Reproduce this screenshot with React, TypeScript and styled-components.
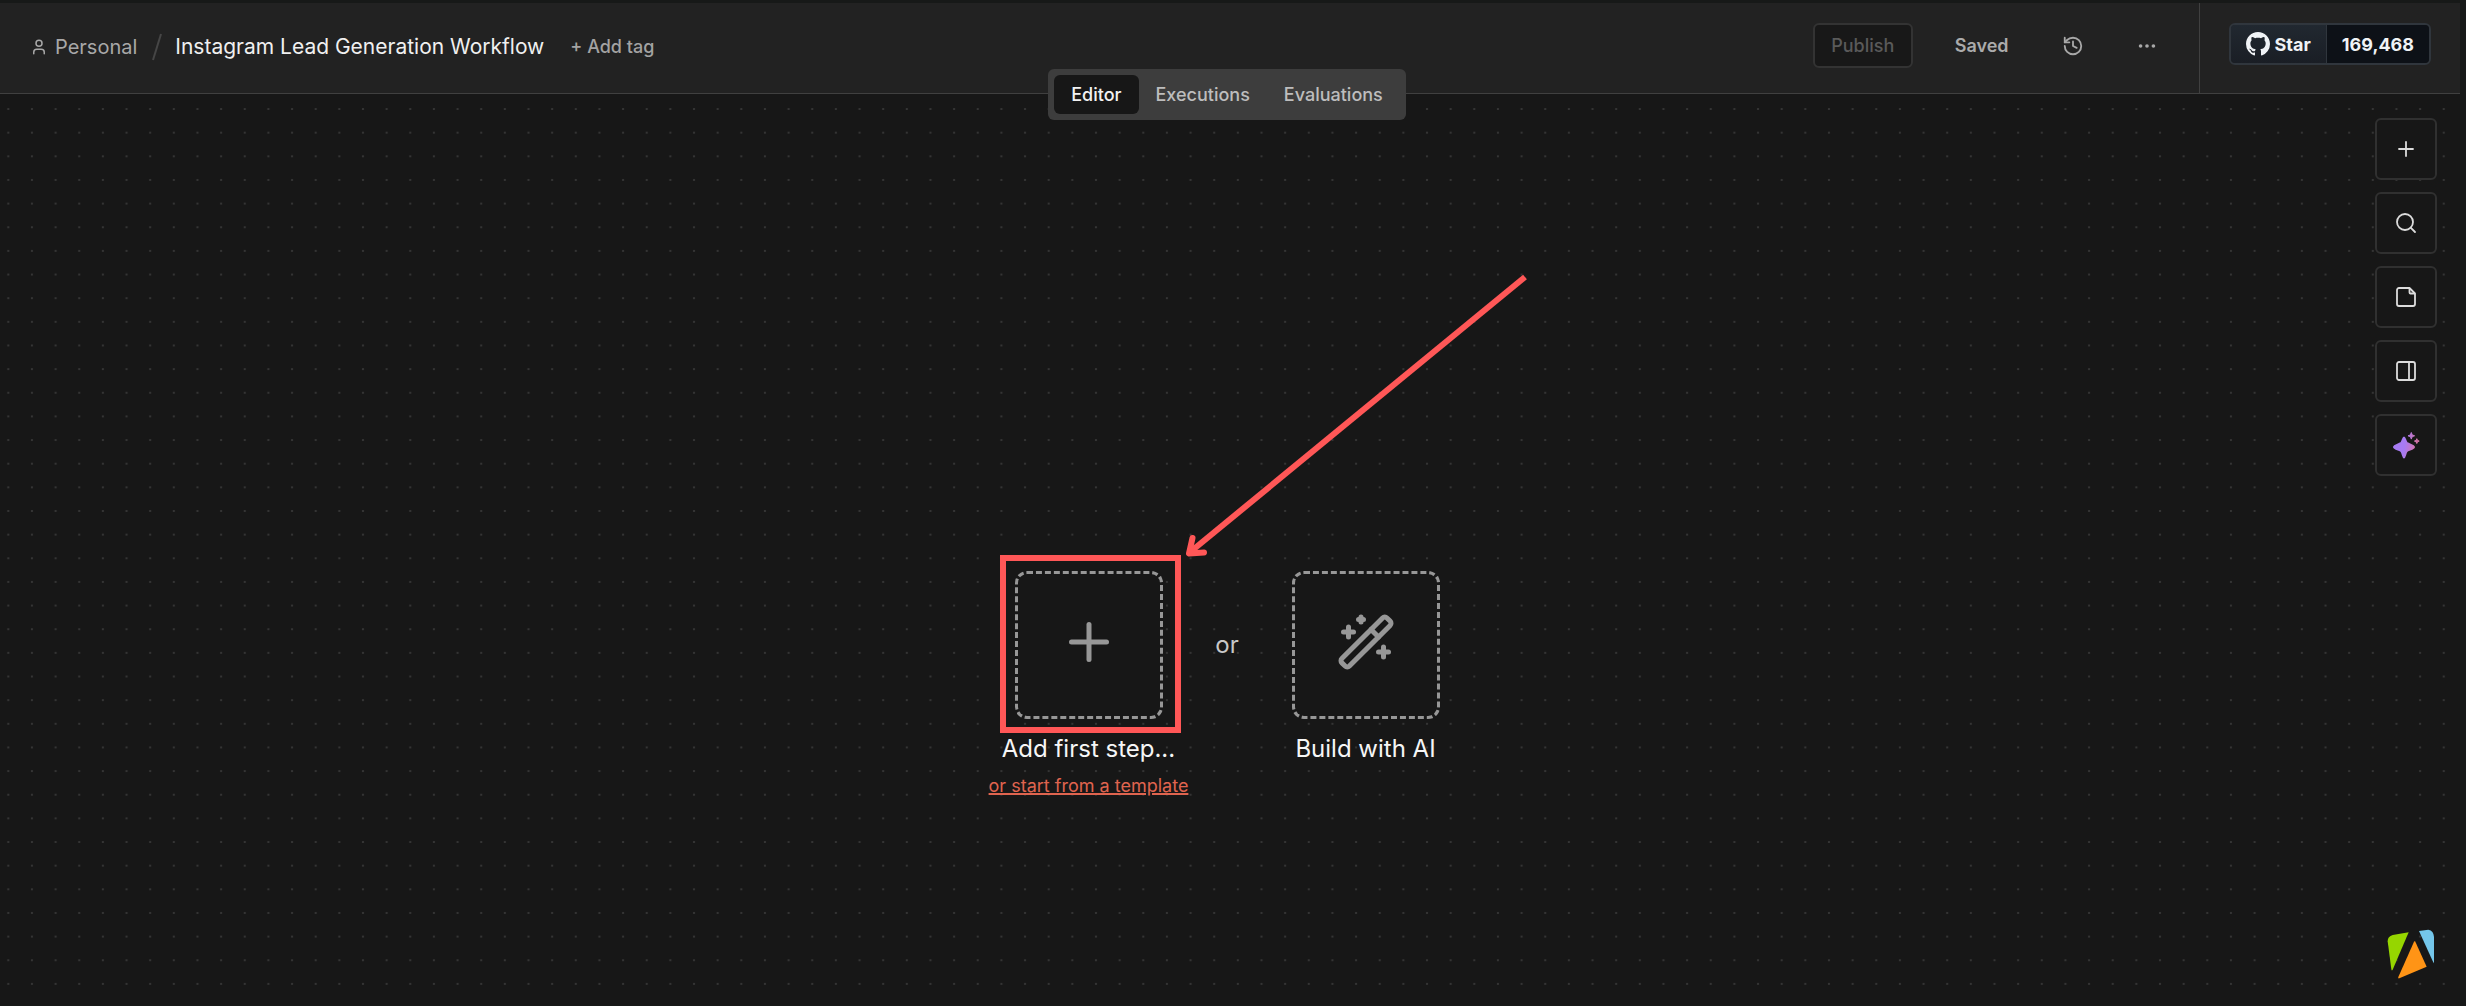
import React from "react";
import styled, { createGlobalStyle } from "styled-components";
import { Ellipsis, History, PanelRight, Plus, Search, User, WandSparkles } from "lucide-react";

const GlobalStyle = createGlobalStyle`
  * { box-sizing: border-box; }
  body {
    margin: 0;
    background: #171918;
    color: #e6e6e6;
    font-family: Inter, "Liberation Sans", sans-serif;
  }
  button {
    font: inherit;
    color: inherit;
    background: none;
    border: 0;
    padding: 0;
    cursor: pointer;
  }
  a { color: inherit; text-decoration: none; }
`;

const Page = styled.div`
  display: flex;
  flex-direction: column;
  min-height: 100vh;
  padding: 3px 6px 1px 0;
`;

const Header = styled.header`
  position: relative;
  z-index: 1;
  display: flex;
  justify-content: space-between;
  height: 91px;
  background: #222222;
  border-bottom: 1px solid #404040;
`;

const Breadcrumb = styled.div`
  display: flex;
  align-items: center;
  padding: 0 0 2px 30px;
  font-size: 20px;
  line-height: 24px;
`;

const ProjectLink = styled.a`
  display: flex;
  align-items: center;
  gap: 7px;
  color: #a8a8a8;
`;

const SlashMark = styled.svg`
  margin: 0 12px 0 14px;
`;

const Title = styled.h1`
  margin: 0;
  font-size: 21px;
  font-weight: 400;
  color: #f0f0f0;
`;

const AddTag = styled.button`
  margin-left: 26px;
  font-size: 18px;
  font-weight: 500;
  color: #a3a3a3;
`;

const HeaderSide = styled.div`
  display: flex;
`;

const Actions = styled.div`
  display: flex;
  align-items: center;
  gap: 30px;
  padding: 0 30px 5px 0;
  font-size: 18px;
  font-weight: 500;
`;

const PublishButton = styled.button`
  width: 100px;
  height: 45px;
  border: 2px solid #333333;
  border-radius: 6px;
  background: #181818;
  color: #5a5a5a;
`;

const SavedState = styled.span`
  padding: 0 12px;
  color: #ababab;
  font-weight: 600;
`;

const IconButton = styled.button`
  display: grid;
  place-items: center;
  width: 44px;
  height: 44px;
  color: #a8a8a8;
`;

const StarArea = styled.div`
  display: flex;
  align-items: center;
  padding: 0 29px 8px;
  border-left: 1px solid #404040;
`;

const StarBox = styled.div`
  display: flex;
  height: 42px;
  border: 2px solid #30363d;
  border-radius: 6px;
  overflow: hidden;
  color: #f0f3f6;
  font-size: 18px;
  font-weight: 700;
`;

const StarLink = styled.a`
  display: flex;
  align-items: center;
  gap: 5px;
  padding: 0 15px;
  background: linear-gradient(#212830, #1a1e25);
  border-right: 1px solid #30363d;
`;

const StarCount = styled.a`
  display: flex;
  align-items: center;
  padding: 0 15px;
  background: #0d1117;
`;

const TabsRow = styled.div`
  position: absolute;
  top: 66px;
  left: 0;
  right: 6px;
  display: flex;
  justify-content: center;
  pointer-events: none;
`;

const Tabs = styled.nav`
  display: flex;
  height: 51px;
  padding: 6px;
  border-radius: 6px;
  background: #3d3d3d;
  pointer-events: auto;
`;

const Tab = styled.button<{ $active?: boolean }>`
  padding: 0 17px;
  border-radius: 6px;
  font-size: 18px;
  font-weight: 500;
  color: ${(p) => (p.$active ? "#f2f2f2" : "#bdbdbd")};
  background: ${(p) => (p.$active ? "#171717" : "transparent")};
`;

const Canvas = styled.main`
  position: relative;
  flex: 1;
  display: flex;
  align-items: center;
  justify-content: center;
  padding: 269px 6px 0 0;
  background: #171717;
`;

const Grid = styled.svg`
  position: absolute;
  inset: 0;
  width: 100%;
  height: 100%;
`;

const Choices = styled.div`
  position: relative;
  display: flex;
  align-items: flex-start;
`;

const Choice = styled.div`
  position: relative;
  display: flex;
  flex-direction: column;
  align-items: center;
  width: 200px;
`;

const ChoiceBox = styled.button`
  display: grid;
  place-items: center;
  width: 148px;
  height: 148px;
  padding-bottom: 5px;
  border: 3px dashed #979797;
  border-radius: 12px;
  background: #171717;
  color: #979797;
`;

const ChoiceLabel = styled.span`
  margin-top: 15px;
  font-size: 24px;
  line-height: 30px;
  color: #f6f6f6;
`;

const TemplateLink = styled.a`
  margin-top: 10px;
  font-size: 18px;
  line-height: 24px;
  white-space: nowrap;
  color: #e0644f;
  text-decoration: underline;
  text-decoration-thickness: 2px;
`;

const Or = styled.span`
  width: 77px;
  line-height: 148px;
  font-size: 24px;
  text-align: center;
  color: #c8c8c8;
`;

const Highlight = styled.div`
  position: absolute;
  top: -16px;
  left: 11px;
  width: 181px;
  height: 178px;
  border: 6px solid #ff5757;
  pointer-events: none;
`;

const Arrow = styled.svg`
  position: absolute;
  left: 190px;
  bottom: 100%;
  margin-bottom: 9px;
  pointer-events: none;
`;

const Tools = styled.div`
  position: absolute;
  top: 24px;
  right: 23px;
  display: flex;
  flex-direction: column;
  gap: 12px;
`;

const ToolButton = styled.button`
  display: grid;
  place-items: center;
  width: 62px;
  height: 62px;
  border: 2px solid #303030;
  border-radius: 6px;
  background: #171717;
  color: #dcdcdc;
`;

const Badge = styled.svg`
  position: absolute;
  right: 25px;
  bottom: 26px;
`;

const GitHubMark = () => (
  <svg width="24" height="24" viewBox="0 0 16 16" fill="currentColor" aria-hidden="true">
    <path d="M8 0c4.42 0 8 3.58 8 8a8.013 8.013 0 0 1-5.45 7.59c-.4.08-.55-.17-.55-.38 0-.27.01-1.13.01-2.2 0-.75-.25-1.23-.54-1.48 1.78-.2 3.65-.88 3.65-3.95 0-.88-.31-1.59-.82-2.15.08-.2.36-1.02-.08-2.12 0 0-.67-.22-2.2.82-.64-.18-1.32-.27-2-.27-.68 0-1.36.09-2 .27-1.53-1.03-2.2-.82-2.2-.82-.44 1.1-.16 1.92-.08 2.12-.51.56-.82 1.28-.82 2.15 0 3.06 1.86 3.75 3.64 3.95-.23.2-.44.55-.51 1.07-.46.21-1.61.55-2.33-.66-.15-.24-.6-.83-1.23-.82-.67.01-.27.38.01.53.34.19.73.9.82 1.13.16.45.68 1.31 2.69.94 0 .67.01 1.3.01 1.49 0 .21-.15.45-.55.38A7.995 7.995 0 0 1 0 8c0-4.42 3.58-8 8-8Z" />
  </svg>
);

const NoteIcon = () => (
  <svg width="24" height="24" viewBox="0 0 24 24" fill="none" stroke="currentColor" strokeWidth="1.800" strokeLinejoin="round" aria-hidden="true">
    <path d="M15.500 3H5a2 2 0 0 0-2 2v14a2 2 0 0 0 2 2h14a2 2 0 0 0 2-2V8.500Z" />
    <path d="M15.500 3v4.500a1 1 0 0 0 1 1H21" />
  </svg>
);

const SparkleIcon = () => (
  <svg width="28" height="28" viewBox="0 0 28 28" aria-hidden="true">
    <defs>
      <linearGradient id="sparkle" gradientUnits="userSpaceOnUse" x1="1" y1="12" x2="27" y2="16">
        <stop offset="0.45" stopColor="#a77bf3" />
        <stop offset="0.9" stopColor="#d974a8" />
      </linearGradient>
    </defs>
    <g fill="url(#sparkle)" stroke="url(#sparkle)" strokeLinejoin="round">
      <path strokeWidth="2" d="M12 6.500c.8 0 1.400 3.800 2.600 5.200 1.500 1.500 7.400 2.300 7.400 4.300s-5.900 2.800-7.400 4.300C13.400 21.700 12.800 26.500 12 26.500s-1.400-4.800-2.600-6.200C7.900 18.800 2 18 2 16s5.900-2.800 7.400-4.300C10.600 10.300 11.200 6.500 12 6.500Z" />
      <path strokeWidth="1" d="M19.300 1.500 20.200 3.900 22.600 4.800 20.200 5.700 19.300 8.100 18.400 5.700 16 4.800 18.400 3.900Z" />
      <path strokeWidth="1" d="M24.800 7.700 25.500 9.400 27.200 10.100 25.500 10.800 24.800 12.500 24.100 10.800 22.400 10.100 24.100 9.400Z" />
    </g>
  </svg>
);

const TABS = ["Editor", "Executions", "Evaluations"];

export default function App() {
  return (
    <>
      <GlobalStyle />
      <Page>
        <Header>
          <Breadcrumb>
            <ProjectLink href="#personal">
              <User size={18} strokeWidth={2} />
              Personal
            </ProjectLink>
            <SlashMark width="12" height="28" viewBox="0 0 12 28" aria-hidden="true">
              <path d="M10 1 2 27" stroke="#464646" strokeWidth="2" />
            </SlashMark>
            <Title>Instagram Lead Generation Workflow</Title>
            <AddTag type="button">+ Add tag</AddTag>
          </Breadcrumb>
          <HeaderSide>
            <Actions>
              <PublishButton type="button" disabled>Publish</PublishButton>
              <SavedState>Saved</SavedState>
              <IconButton type="button" aria-label="Workflow history">
                <History size={22} />
              </IconButton>
              <IconButton type="button" aria-label="More actions">
                <Ellipsis size={22} />
              </IconButton>
            </Actions>
            <StarArea>
              <StarBox>
                <StarLink href="#star">
                  <GitHubMark />
                  Star
                </StarLink>
                <StarCount href="#stargazers">169,468</StarCount>
              </StarBox>
            </StarArea>
          </HeaderSide>
          <TabsRow>
            <Tabs>
              {TABS.map((name, i) => (
                <Tab key={name} type="button" $active={i === 0}>{name}</Tab>
              ))}
            </Tabs>
          </TabsRow>
        </Header>
        <Canvas>
          <Grid aria-hidden="true">
            <defs>
              <pattern id="dots" x="-3.500" y="3.200" width="23.645" height="23.645" patternUnits="userSpaceOnUse">
                <circle cx="11.820" cy="11.820" r="1.100" fill="#3a3a3a" />
              </pattern>
            </defs>
            <rect width="100%" height="100%" fill="url(#dots)" />
          </Grid>
          <Choices>
            <Choice>
              <ChoiceBox type="button" aria-label="Add first step">
                <Plus size={60} />
              </ChoiceBox>
              <ChoiceLabel>Add first step...</ChoiceLabel>
              <TemplateLink href="#templates">or start from a template</TemplateLink>
              <Highlight />
            </Choice>
            <Or>or</Or>
            <Choice>
              <ChoiceBox type="button" aria-label="Build with AI">
                <WandSparkles size={60} />
              </ChoiceBox>
              <ChoiceLabel>Build with AI</ChoiceLabel>
            </Choice>
            <Arrow width="350" height="290" viewBox="0 0 350 290" fill="none" stroke="#ff5757" strokeWidth="6" aria-hidden="true">
              <path d="M346 5 10 281" />
              <path d="M13.500 266 10 281.500 25 280.500" strokeLinecap="round" strokeLinejoin="round" />
            </Arrow>
          </Choices>
          <Tools>
            <ToolButton type="button" aria-label="Add node"><Plus size={24} strokeWidth={1.8} /></ToolButton>
            <ToolButton type="button" aria-label="Search"><Search size={24} strokeWidth={1.8} /></ToolButton>
            <ToolButton type="button" aria-label="Add sticky note"><NoteIcon /></ToolButton>
            <ToolButton type="button" aria-label="Toggle panel"><PanelRight size={24} strokeWidth={1.8} /></ToolButton>
            <ToolButton type="button" aria-label="Assistant"><SparkleIcon /></ToolButton>
          </Tools>
          <Badge width="48" height="50" viewBox="141 86 144 150" aria-hidden="true">
            <path fill="#96d600" d="M206 96 158 208q-3 5-4-1L143 123q0-15 15-19Z" />
            <path fill="#ff9416" d="M225 122 260 199 178 234q-5 1-3-4L222 124Z" />
            <path fill="#74c6ea" d="M237 92 265 88q16 3 17 22V189L279 184Z" />
          </Badge>
        </Canvas>
      </Page>
    </>
  );
}
